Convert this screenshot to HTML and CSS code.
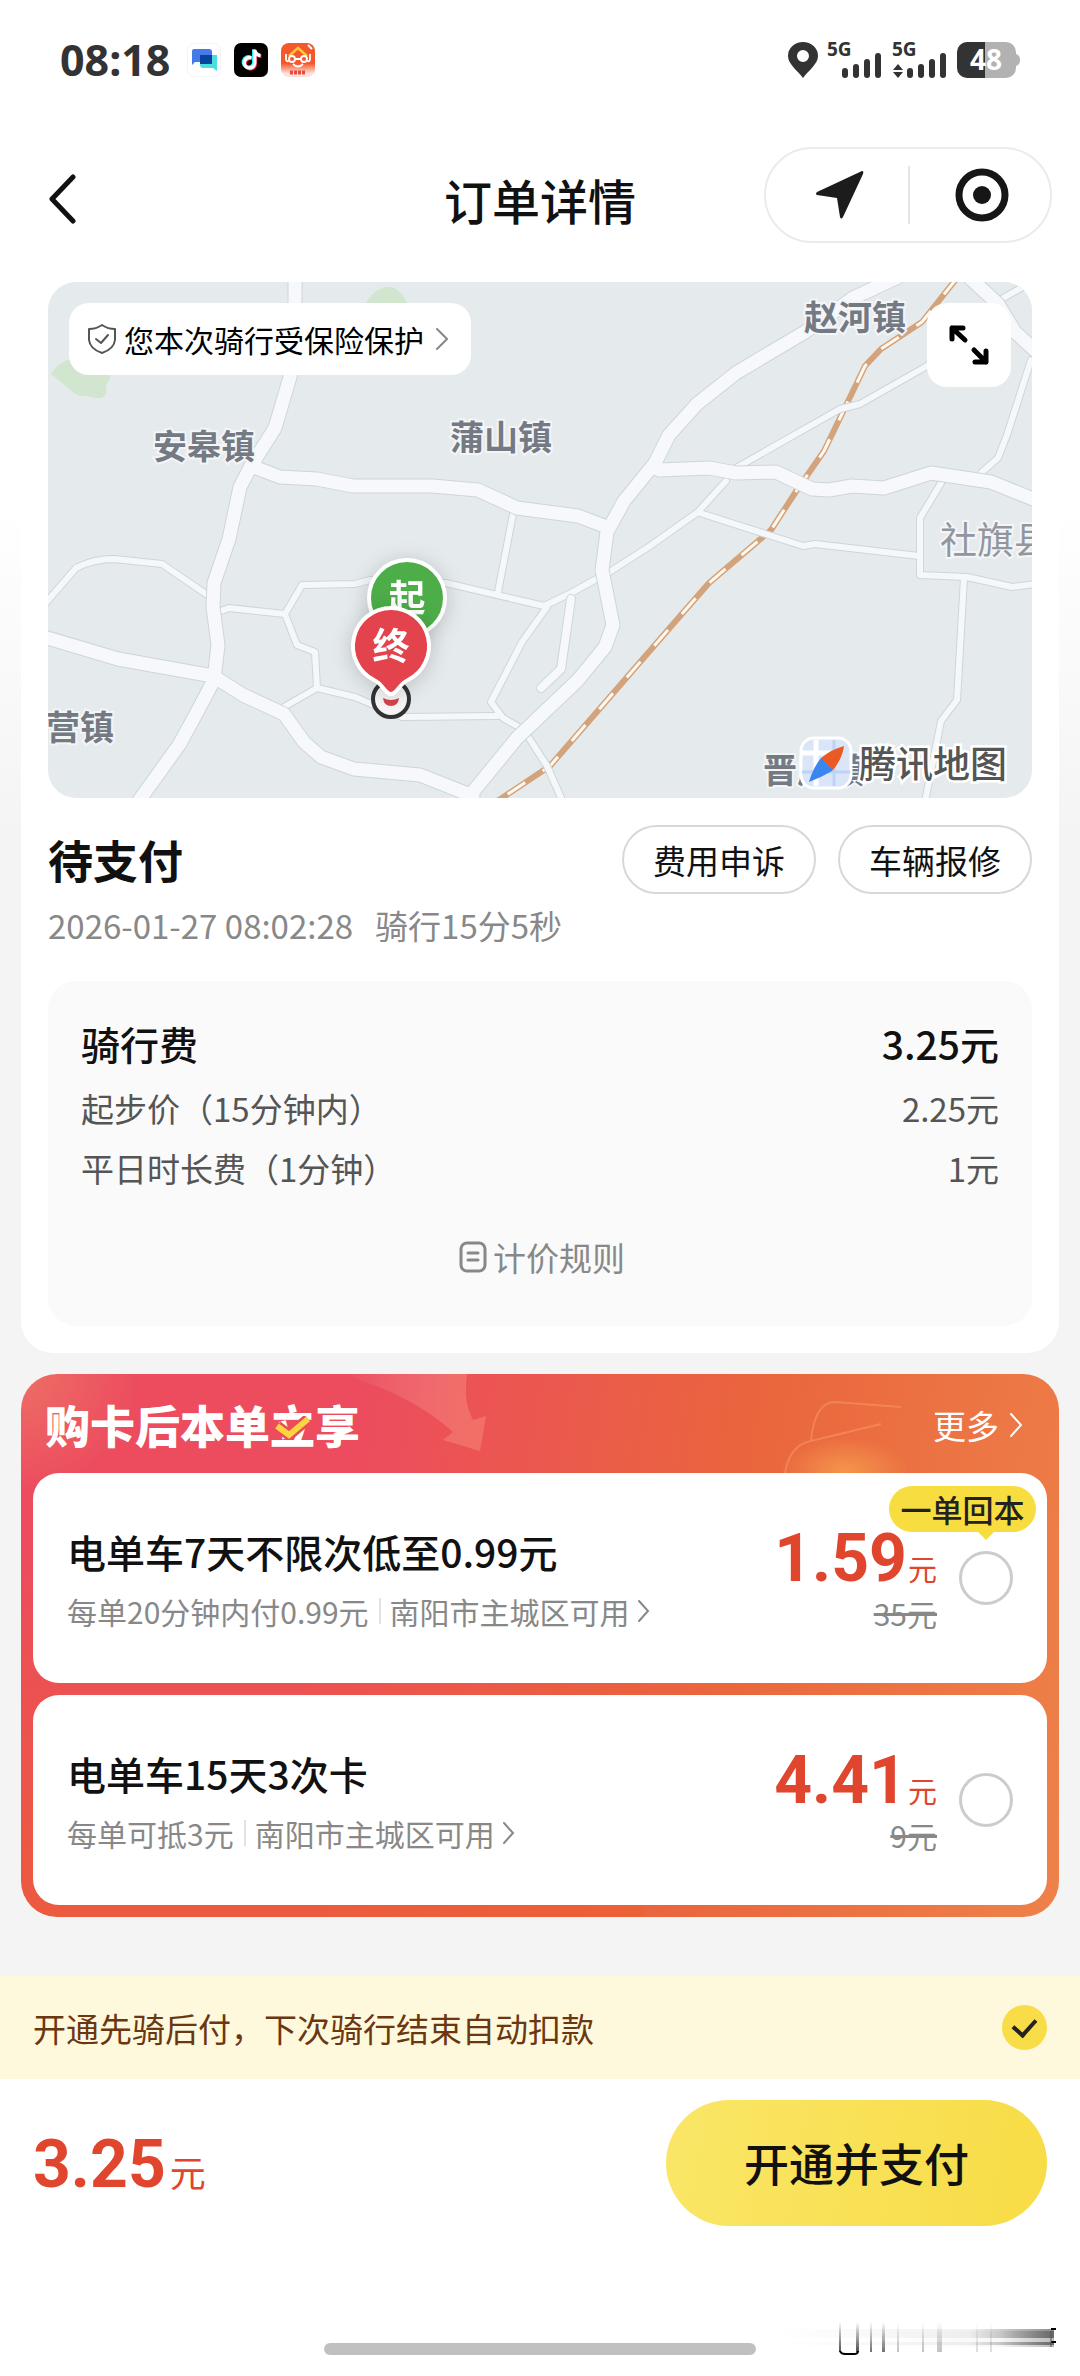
FILE: index.html
```html
<!DOCTYPE html>
<html lang="zh-CN">
<head>
<meta charset="utf-8">
<meta name="viewport" content="width=device-width, initial-scale=1">
<title>订单详情</title>
<link rel="stylesheet" href="styles.css">
</head>
<body>
<header class="top">
  <div class="status-bar">
    <div class="status-left">
      <time class="clock">08:18</time>
      <svg class="app-icon" viewBox="0 0 34 34" aria-hidden="true">
        <rect x=".5" y=".5" width="33" height="33" rx="7" fill="#fff" stroke="#f1f3f5"/>
        <path d="M5 8a2 2 0 0 1 2-2h15a3 3 0 0 1 3 3v10H8l-3 3z" fill="#447be8"/>
        <path d="M13 12h17v16l-4-3H16a3 3 0 0 1-3-3z" fill="#4bdde0"/>
        <path d="M13 12h12v9H13z" fill="#08439c"/>
      </svg>
      <svg class="app-icon" viewBox="0 0 34 34" aria-hidden="true">
        <rect width="34" height="34" rx="7" fill="#000"/>
        <g fill="none" stroke-width="3.4">
          <path d="M17.500 15a5.200 5.200 0 1 0 3.200 5V7c.5 3.500 2.500 5.200 5.800 5.500" stroke="#fe2c55" transform="translate(.8 .8)"/>
          <path d="M17.500 15a5.200 5.200 0 1 0 3.200 5V7c.5 3.500 2.500 5.200 5.800 5.500" stroke="#25f4ee" transform="translate(-1 -.8)"/>
          <path d="M17.500 15a5.200 5.200 0 1 0 3.200 5V7c.5 3.500 2.500 5.200 5.800 5.500" stroke="#fff"/>
        </g>
      </svg>
      <svg class="app-icon" viewBox="0 0 34 34" aria-hidden="true">
        <defs><linearGradient id="appBg" x2="0" y2="1"><stop offset=".6" stop-color="#f4582b"/><stop offset=".9" stop-color="#fde3dc"/></linearGradient></defs>
        <rect width="34" height="34" rx="8" fill="url(#appBg)"/>
        <path d="M8 13 17 5l9 8" fill="none" stroke="#ffc53d" stroke-width="2.500"/>
        <g fill="none" stroke="#fff" stroke-width="1.800"><path d="M5 11v5q0 3 3 2M29 11v5q0 3-3 2M14 16h6M12 21q5 5 10 0"/><circle cx="11" cy="16" r="3"/><circle cx="23" cy="16" r="3"/></g>
        <path d="M27 2l4 4" stroke="#fff" stroke-width="2"/>
        <path d="M9 29.500h16" stroke="#ea4a3c" stroke-width="4" stroke-dasharray="3 1"/>
      </svg>
    </div>
    <svg class="status-right" viewBox="0 0 232 36" role="img" aria-label="5G 48%">
      <path fill="#333" fill-rule="evenodd" d="M15 36C9 28 0 22 0 14a15 14 0 0 1 30 0c0 8-9 14-15 22zM15 20a6 6 0 1 0 0-12 6 6 0 0 0 0 12z"/>
      <g fill="#333">
        <text x="39" y="14" class="net">5G</text>
        <rect x="54" y="26" width="6" height="10" rx="3"/><rect x="65" y="22" width="6" height="14" rx="3"/><rect x="76" y="17" width="6" height="19" rx="3"/><rect x="87" y="11" width="6" height="25" rx="3"/>
        <text x="104" y="14" class="net">5G</text>
        <path d="M105 28l5-6 5 6zM105 30l5 6 5-6z"/>
        <rect x="119" y="26" width="6" height="10" rx="3"/><rect x="130" y="22" width="6" height="14" rx="3"/><rect x="141" y="17" width="6" height="19" rx="3"/><rect x="152" y="11" width="6" height="25" rx="3"/>
      </g>
      <path d="M197 0h21a10 10 0 0 1 10 10v2q4 1 4 6t-4 6v2a10 10 0 0 1-10 10h-21z" fill="#b2b2b2"/>
      <path d="M197 0h-18a10 10 0 0 0-10 10v16a10 10 0 0 0 10 10h18z" fill="#333"/>
      <text x="198" y="28" class="level">48</text>
    </svg>
  </div>
  <nav class="nav-bar">
    <button class="back" type="button" aria-label="返回">
      <svg viewBox="0 0 28 50"><path d="M25 3 4 25l21 22" fill="none" stroke="#111" stroke-width="5" stroke-linecap="round" stroke-linejoin="round"/></svg>
    </button>
    <h1 class="nav-title">订单详情</h1>
    <div class="capsule">
      <button class="capsule-btn" type="button" aria-label="位置">
        <svg width="48" height="48" viewBox="0 0 48 48"><path d="M46 0Q48 0 47 3L27 46q-2 3-3 0L21 27 1 24q-2-1 0-3z" fill="#1c1c1c"/></svg>
      </button>
      <button class="capsule-btn" type="button" aria-label="关闭">
        <svg width="54" height="54" viewBox="0 0 54 54"><circle cx="27" cy="27" r="23" fill="none" stroke="#161616" stroke-width="7"/><circle cx="27" cy="27" r="9" fill="#161616"/></svg>
      </button>
    </div>
  </nav>
</header>

<main class="content">
  <section class="order">
    <div class="map">
      <svg class="map-art" viewBox="0 0 984 516" preserveAspectRatio="xMidYMid slice" role="img" aria-label="骑行地图">
        <defs>
          <g id="thin">
            <path d="M-4 323 28 286Q45 277 66 277L114 282 158 312"/>
            <path d="M173 329l8-3 56 6 17-29 53-1 15-4 76 3 98 23 27-13 40-22 39-25 48-34 28-31"/>
            <path d="M237 332l12 31 18 7 2 36-33 19"/>
            <path d="M269 406l38 9 47 20 95-1"/>
            <path d="M465 232 450 310"/>
            <path d="M499 325 474 360 443 420 455 436 469 444"/>
            <path d="M481 456 499 484 515 520"/>
            <path d="M688 186 792 127 812 122 879 84 950 19 980 2"/>
            <path d="M652 231 755 264 767 262 871 274"/>
            <path d="M893 201 872 236V293L919 295 964 305 988 302"/>
            <path d="M916 296 909 418 893 439 877 520"/>
            <path d="M983 78 959 153 950 176 933 191"/>
          </g>
          <g id="wide">
            <path d="M247-5V70L242 95 227 146 203 184 192 205 181 257 166 301 165 325 170 363 166 398 148 432 131 463 90 520"/>
            <path d="M203 184 232 195 269 197 305 204H384L430 208 469 226 530 234 559 245"/>
            <path d="M-4 355 70 377 165 394 195 413 236 432 256 460 273 475 306 487 372 493 425 514"/>
            <path d="M415 522 469 456 530 398 557 365 565 343 554 288 559 250 576 219 607 181 621 153 649 122 688 91 757 50 805 16 850-5"/>
            <path d="M611 188 661 186 688 191 728 190 764 207 781 208 804 204 836 206 883 191 943 200 990 219"/>
            <path d="M922-4 950 22 967 50 990 71"/>
          </g>
          <path id="mid" d="M523 317 513 387 493 406"/>
          <path id="rail" d="M909-4 874 40 833 67 817 84 792 136 776 169 749 208 723 248 661 301 626 341 502 484 448 520"/>
          <linearGradient id="needle" x1="1" x2="0" y2="1"><stop offset=".5" stop-color="#ea5a24"/><stop offset=".5" stop-color="#3a85ee"/></linearGradient>
        </defs>
        <rect width="984" height="516" fill="#e5eaed"/>
        <path d="M3 92q8-14 30-18l30 20-5 10q2 10-5 12-9 0-14-2-9 1-14-4z" fill="#d2e6cf"/>
        <path d="M315 26q10-20 24-21 14-1 22 21z" fill="#d2e6cf"/>
        <g fill="none" stroke-linejoin="round" stroke-linecap="round">
          <use href="#rail" stroke="#d3a37b" stroke-width="6"/>
          <use href="#rail" stroke="#fff8ee" stroke-width="3" stroke-dasharray="21 21" stroke-linecap="butt"/>
          <use href="#thin" stroke="#ced5da" stroke-width="8"/>
          <use href="#thin" stroke="#f5f8fa" stroke-width="6"/>
          <use href="#wide" stroke="#ced5da" stroke-width="15"/>
          <use href="#mid" stroke="#ced5da" stroke-width="10"/>
          <use href="#wide" stroke="#f6f8fb" stroke-width="13"/>
          <use href="#mid" stroke="#f6f8fb" stroke-width="8"/>
        </g>
        <g class="place">
          <text x="105" y="177">安皋镇</text>
          <text x="402" y="168">蒲山镇</text>
          <text x="756" y="48">赵河镇</text>
          <text x="-2" y="458">营镇</text>
          <text x="715" y="501">晋庄镇</text>
          <text x="892" y="272" class="county">社旗县</text>
        </g>
        <g>
          <rect x="753" y="456" width="50" height="50" rx="13" fill="#dbe5f8" stroke="#fff" stroke-width="3"/>
          <path d="M768 458v46M754 471h36" stroke="#fff" stroke-width="5"/><path d="M786 458v46M754 490h48" stroke="#bdd3f6" stroke-width="3"/>
          <path d="M796 464q-2 14-12 25-12 7-23 11 4-14 12-24 11-9 23-12z" fill="url(#needle)"/>
          <text x="811" y="496" class="brand">腾讯地图</text>
        </g>
        <circle cx="343" cy="417" r="18" fill="#f7f7f7" stroke="#333" stroke-width="4"/>
        <path d="M335 416q8 4 16 0-1 8-8 8t-8-8z" fill="#d8434c"/>
        <g class="pin">
          <circle cx="359" cy="316" r="38" fill="#4dae49" stroke="#fff" stroke-width="4"/>
          <text x="359" y="330">起</text>
        </g>
        <g class="pin">
          <path d="M343 326a38 38 0 0 1 17 72c-9 4-11 14-17 14s-8-10-17-14a38 38 0 0 1 17-72z" fill="#e2434d" stroke="#fff" stroke-width="4"/>
          <text x="343" y="378">终</text>
        </g>
      </svg>
      <a class="insurance" href="#insurance">
        <svg width="28" height="32" viewBox="0 0 28 32" fill="none" stroke="#555" stroke-width="2" stroke-linecap="round" stroke-linejoin="round"><path d="M14 2Q20 6 27 6V17Q26 26 14 30 2 26 1 17V6Q8 6 14 2z"/><path d="M8 16l5 4 7-8"/></svg>
        <span>您本次骑行受保险保护</span>
        <svg class="chev" width="12" height="22" viewBox="0 0 12 22"><path d="M1 1l10 10L1 21"/></svg>
      </a>
      <button class="expand" type="button" aria-label="放大地图">
        <svg width="42" height="42" viewBox="0 0 42 42" fill="none" stroke="#000" stroke-width="5" stroke-linecap="round" stroke-linejoin="round"><path d="M17 16 4 4M4 15V4h11M26 26l12 12M38 27v11H27"/></svg>
      </button>
    </div>

    <div class="order-head">
      <h2 class="order-state">待支付</h2>
      <button class="pill" type="button">费用申诉</button>
      <button class="pill" type="button">车辆报修</button>
    </div>
    <p class="order-meta"><time>2026-01-27 08:02:28</time><span>骑行15分5秒</span></p>

    <div class="fees">
      <dl class="fee-list">
        <div class="fee-row fee-total"><dt>骑行费</dt><dd>3.25元</dd></div>
        <div class="fee-row"><dt>起步价（15分钟内）</dt><dd>2.25元</dd></div>
        <div class="fee-row"><dt>平日时长费（1分钟）</dt><dd>1元</dd></div>
      </dl>
      <a class="rules" href="#rules">
        <svg width="28" height="32" viewBox="0 0 28 32" fill="none" stroke="#888" stroke-width="3" stroke-linecap="round"><rect x="2" y="2" width="24" height="28" rx="6"/><path d="M9 12h10M9 19h10"/></svg>
        <span>计价规则</span>
      </a>
    </div>
  </section>

  <section class="promo">
    <svg class="promo-art" viewBox="0 0 1038 99" preserveAspectRatio="xMidYMin slice" aria-hidden="true">
      <defs>
        <linearGradient id="swoosh" x1="0" x2="1"><stop offset="0" stop-color="#fff" stop-opacity="0"/><stop offset="1" stop-color="#ffa088" stop-opacity=".35"/></linearGradient>
        <radialGradient id="glow"><stop offset="0" stop-color="#f7a650" stop-opacity=".7"/><stop offset="1" stop-color="#f7a650" stop-opacity="0"/></radialGradient>
      </defs>
      <path d="M320 0H446Q442 28 452 46L465 42 459 77 422 66 432 58Q390 20 320 0z" fill="url(#swoosh)"/>
      <ellipse cx="824" cy="97" rx="64" ry="34" fill="url(#glow)"/>
      <path d="M764 99Q768 74 786 68L860 50M790 66Q794 28 814 28L880 33" fill="none" stroke="#f9a274" stroke-opacity=".45" stroke-width="2"/>
    </svg>
    <div class="promo-head">
      <h2 class="promo-title">购卡后本单<span class="stamp">立<svg viewBox="0 0 36 24" aria-hidden="true"><path d="M2 10l12 9L33 3" fill="none" stroke="#eb4d57" stroke-width="11"/><path d="M2 10l12 9L33 3" fill="none" stroke="#fcd53f" stroke-width="6"/></svg></span>享</h2>
      <a class="more" href="#more">更多<svg class="chev" width="14" height="26" viewBox="0 0 14 26"><path d="M2 2l10 11L2 24"/></svg></a>
    </div>
    <div class="option">
      <div class="option-text">
        <label class="option-name" for="card7">电单车7天不限次低至0.99元</label>
        <div class="option-sub"><span>每单20分钟内付0.99元</span><a href="#area7">南阳市主城区可用<svg class="chev" width="12" height="22" viewBox="0 0 12 22"><path d="M1 1l9 10-9 10"/></svg></a></div>
      </div>
      <div class="option-price"><strong class="price">1.59<small>元</small></strong><del>35元</del></div>
      <div class="pick"><input class="radio" type="radio" name="card" id="card7"><span class="badge">一单回本</span></div>
    </div>
    <div class="option">
      <div class="option-text">
        <label class="option-name" for="card15">电单车15天3次卡</label>
        <div class="option-sub"><span>每单可抵3元</span><a href="#area15">南阳市主城区可用<svg class="chev" width="12" height="22" viewBox="0 0 12 22"><path d="M1 1l9 10-9 10"/></svg></a></div>
      </div>
      <div class="option-price"><strong class="price">4.41<small>元</small></strong><del>9元</del></div>
      <div class="pick"><input class="radio" type="radio" name="card" id="card15"></div>
    </div>
  </section>
</main>

<footer class="bottom">
  <div class="autopay">
    <label for="autopay">开通先骑后付，下次骑行结束自动扣款</label>
    <input class="check" type="checkbox" id="autopay" checked>
  </div>
  <div class="pay">
    <strong class="price pay-price">3.25<small>元</small></strong>
    <button class="pay-btn" type="button">开通并支付</button>
  </div>
  <div class="home">
    <div class="home-bar"></div>
    <svg class="smear" width="284" height="36" viewBox="0 0 284 36" aria-hidden="true">
      <defs>
        <linearGradient id="smearX"><stop offset="0" stop-color="#000" stop-opacity="0"/><stop offset=".7" stop-color="#000" stop-opacity=".05"/><stop offset="1" stop-color="#000" stop-opacity=".45"/></linearGradient>
        <linearGradient id="smearY" x2="0" y2="1"><stop offset="0" stop-color="#000" stop-opacity="0"/><stop offset="1" stop-color="#000" stop-opacity=".7"/></linearGradient>
      </defs>
      <g fill="url(#smearX)"><path d="M0 9h280v4H0zM0 13h280v5H0zM0 22h280v3H0z"/><path d="M100 11h180v16H100z" opacity=".6"/></g>
      <g fill="url(#smearY)"><path d="M65 2h2v30h-2zM82 2h3v30h-3z"/><path d="M96 2h2v30h-2zM108 2h3v30h-3z" opacity=".8"/><path d="M123 2h2v30h-2zM148 2h2v30h-2zM163 2h5v30h-5z" opacity=".35"/><path d="M202 2h2v30h-2zM216 2h2v30h-2z" opacity=".2"/></g>
      <path d="M66 31q1 3 5 3h9q4 0 4-3" fill="none" stroke="#000" stroke-width="2"/>
      <path d="M277 9h5M277 22h5" stroke="#000" stroke-width="2"/><path d="M277 11v16" stroke="#555" stroke-width="1"/>
    </svg>
  </div>
</footer>
</body>
</html>
```

FILE: styles.css
```css
* {
  box-sizing: border-box;
}

body {
  margin: 0;
  min-height: 100vh;
  display: flex;
  flex-direction: column;
  background: #f4f4f4;
  color: #111;
  font-family: "Noto Sans CJK SC", "Noto Sans", sans-serif;
  font-size: 33px;
  line-height: 60px;
}

h1, h2, p, dl, dd {
  margin: 0;
}

a {
  color: inherit;
  text-decoration: none;
}

button {
  padding: 0;
  border: 0;
  background: none;
  color: inherit;
  font: inherit;
}

svg {
  display: block;
  flex: none;
}

.chev {
  fill: none;
  stroke: currentColor;
  stroke-width: 2;
  stroke-linecap: round;
}

/* Status and navigation bars */
.top {
  background: #fff;
}

.status-bar {
  display: flex;
  justify-content: space-between;
  align-items: center;
  height: 120px;
  padding: 0 60px;
}

.status-left {
  display: flex;
  align-items: center;
  gap: 13px;
}

.clock {
  margin-right: 4px;
  color: #333;
  font: 700 43px/60px "Noto Sans", sans-serif;
}

.app-icon {
  width: 34px;
  height: 34px;
}

.status-right {
  width: 232px;
  height: 36px;
  overflow: visible;
}

.net {
  font: 700 19px "Noto Sans", sans-serif;
}

.level {
  fill: #fff;
  font: 700 28px "Noto Sans", sans-serif;
  text-anchor: middle;
}

.nav-bar {
  display: grid;
  grid-template-columns: 1fr auto 1fr;
  align-items: center;
  padding: 27px 28px 39px;
}

.back {
  width: 28px;
  height: 50px;
  margin: 8px 0 0 20px;
}

.nav-title {
  margin-top: 8px;
  font-size: 48px;
  font-weight: 500;
  line-height: 72px;
}

.capsule {
  justify-self: end;
  display: flex;
  width: 288px;
  height: 96px;
  border: 2px solid #ebebeb;
  border-radius: 48px;
}

.capsule-btn {
  flex: 1;
  display: grid;
  place-items: center;
  padding-left: 6px;
}

.capsule-btn + .capsule-btn {
  background: linear-gradient(#e5e5e5, #e5e5e5) left center / 2px 58px no-repeat;
}

/* Order card */
.content {
  flex: 1;
  display: flex;
  flex-direction: column;
  gap: 21px;
  padding: 0 21px 59px;
  background: linear-gradient(#fff 220px, #f4f4f4 560px);
}

.order {
  padding: 0 27px 27px;
  border-radius: 0 0 32px 32px;
  background: #fff;
}

.map {
  position: relative;
  overflow: hidden;
  border-radius: 28px;
}

.map-art {
  width: 100%;
  height: auto;
}

.place {
  fill: #747a84;
  stroke: #f3f5f7;
  stroke-width: 4px;
  paint-order: stroke;
  font-size: 34px;
  font-weight: 700;
}

.county {
  fill: #92979e;
  font-size: 37px;
  font-weight: 400;
}

.brand {
  fill: #555;
  stroke: #fff;
  stroke-width: 5px;
  paint-order: stroke;
  font-size: 37px;
  font-weight: 500;
}

.pin {
  filter: drop-shadow(0 3px 10px rgba(0, 0, 0, 0.18));
}

.pin text {
  fill: #fff;
  font-size: 37px;
  font-weight: 700;
  text-anchor: middle;
}

.insurance {
  position: absolute;
  top: 21px;
  left: 21px;
  display: flex;
  align-items: center;
  gap: 8px;
  height: 72px;
  padding: 0 23px 0 19px;
  border-radius: 20px;
  background: #fff;
  color: #000;
  font-size: 30px;
}

.insurance .chev {
  margin-left: 4px;
  stroke: #888;
}

.expand {
  position: absolute;
  top: 21px;
  right: 21px;
  display: grid;
  place-items: center;
  width: 84px;
  height: 84px;
  border-radius: 20px;
  background: #fff;
}

.order-head {
  display: flex;
  align-items: center;
  gap: 22px;
  padding-top: 27px;
}

.order-state {
  flex: 1;
  font-size: 45px;
  font-weight: 700;
}

.pill {
  width: 194px;
  height: 69px;
  border: 2px solid #d8d8d8;
  border-radius: 35px;
}

.order-meta {
  display: flex;
  gap: 22px;
  margin: 1px 0 26px;
  color: #888;
}

.fees {
  padding: 32px 33px 39px;
  border-radius: 28px;
  background: #fafafa;
}

.fee-row {
  display: flex;
  justify-content: space-between;
  color: #555;
}

.fee-total {
  margin-bottom: 5px;
  color: #111;
  font-size: 39px;
  font-weight: 500;
}

.rules {
  display: flex;
  justify-content: center;
  align-items: center;
  gap: 6px;
  margin-top: 29px;
  padding-left: 4px;
  color: #888;
}

/* Ride cards */
.promo {
  position: relative;
  display: flex;
  flex-direction: column;
  gap: 12px;
  padding: 0 12px 12px;
  overflow: hidden;
  border-radius: 36px;
  background:
    radial-gradient(circle at 0 0, #ed6e66, rgba(237, 110, 102, 0) 120px),
    linear-gradient(rgba(236, 96, 50, 0) 30%, rgba(236, 96, 50, 0.7)) left / 60% 100% no-repeat,
    linear-gradient(100deg, #ec4c5e 30%, #ea653d 65%, #ee8149);
}

.promo-art {
  position: absolute;
  top: 0;
  left: 0;
  width: 100%;
  height: 99px;
}

.promo-head {
  position: relative;
  display: flex;
  justify-content: space-between;
  align-items: center;
  height: 87px;
  padding: 15px 24px 0 12px;
  color: #fff;
}

.promo-title {
  font-size: 45px;
  font-weight: 900;
}

.stamp {
  position: relative;
}

.stamp svg {
  position: absolute;
  left: 5px;
  bottom: 17px;
  width: 36px;
  height: 24px;
}

.more {
  display: flex;
  align-items: center;
  gap: 10px;
}

.option {
  position: relative;
  display: flex;
  align-items: center;
  gap: 22px;
  padding: 0 34px;
  border-radius: 26px;
  background: #fff;
}

.option-text {
  flex: 1;
  padding: 48px 0 42px;
}

.option-name {
  display: block;
  font-size: 39px;
  font-weight: 500;
}

.option-sub {
  display: flex;
  align-items: center;
  gap: 10px;
  color: #888;
  font-size: 30px;
}

.option-sub a {
  display: flex;
  align-items: center;
  gap: 8px;
  padding-left: 11px;
  background: linear-gradient(#e2e2e2, #e2e2e2) left center / 2px 26px no-repeat;
}

.option-price {
  display: flex;
  flex-direction: column;
  align-items: flex-end;
}

.option-price del {
  color: #888;
  font-size: 30px;
  line-height: 30px;
}

.price {
  color: #e0452e;
  font: 700 66px/60px Roboto, "Noto Sans CJK SC", sans-serif;
}

.price small {
  margin-left: 1px;
  font-family: "Noto Sans CJK SC", sans-serif;
  font-size: 29px;
  font-weight: 400;
}

.pick {
  position: relative;
  display: flex;
}

.radio {
  appearance: none;
  width: 54px;
  height: 54px;
  margin: 0;
  border: 3px solid #ccc;
  border-radius: 50%;
}

.badge {
  position: absolute;
  right: -23px;
  bottom: 73px;
  width: 147px;
  border-radius: 23px;
  background: #f7dd3f;
  color: #222;
  font-size: 31px;
  font-weight: 500;
  line-height: 46px;
  text-align: center;
  white-space: nowrap;
}

.badge::after {
  content: "";
  position: absolute;
  top: 100%;
  right: 42px;
  border: 8px solid transparent;
  border-top-color: #f7dd3f;
  border-bottom: 0;
}

/* Payment bar */
.bottom {
  background: #fff;
}

.autopay {
  display: flex;
  justify-content: space-between;
  align-items: center;
  min-height: 103px;
  padding: 0 33px;
  background: #fef9dc;
  color: #6b3710;
}

.check {
  appearance: none;
  display: grid;
  place-items: center;
  width: 45px;
  height: 45px;
  margin: 0;
  border-radius: 50%;
  background: #f8dc48;
}

.check:checked::after {
  content: "";
  width: 11px;
  height: 18px;
  margin-bottom: 5px;
  border: solid #222;
  border-width: 0 4px 4px 0;
  transform: rotate(42deg);
}

.pay {
  display: flex;
  justify-content: space-between;
  align-items: center;
  padding: 21px 33px 94px;
}

.pay-price {
  padding-top: 10px;
}

.pay-price small {
  margin-left: 4px;
  font-size: 36px;
}

.pay-btn {
  width: 381px;
  height: 126px;
  border-radius: 63px;
  background: linear-gradient(100deg, #fae667, #f8dc46);
  font-size: 45px;
  font-weight: 500;
}

.home {
  position: relative;
  padding: 23px 0 21px;
}

.home-bar {
  width: 40%;
  height: 12px;
  margin: 0 auto;
  border-radius: 6px;
  background: #c0c0c0;
}

.smear {
  position: absolute;
  top: 0;
  right: 22px;
}
```
